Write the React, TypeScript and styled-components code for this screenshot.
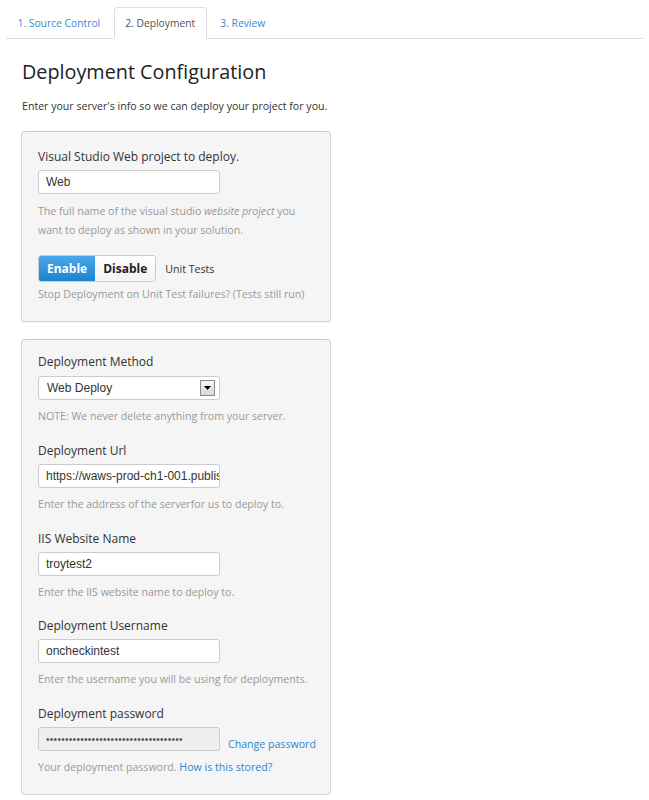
import styled, { createGlobalStyle } from 'styled-components';
import { Fragment } from 'react';

const GlobalStyle = createGlobalStyle`
  body {
    margin: 0;
    background: #fff;
    font-family: "Open Sans", "Liberation Sans", sans-serif;
    color: #333;
  }
`;

const Page = styled.div`
  padding: 7px 6px 0 6px;
`;

const Tabs = styled.div`
  display: flex;
  height: 31px;
  border-bottom: 1px solid #ddd;
`;

const Tab = styled.div<{ $active?: boolean }>`
  display: flex;
  align-items: center;
  padding: 0 10.5px;
  margin-right: 2px;
  margin-bottom: -1px;
  font-size: 10.3px;
  color: ${(p) => (p.$active ? '#555' : '#3a8ad2')};
  background: ${(p) => (p.$active ? '#fff' : 'transparent')};
  border: 1px solid ${(p) => (p.$active ? '#ddd' : 'transparent')};
  border-bottom-color: ${(p) => (p.$active ? '#fff' : 'transparent')};
  border-radius: 4px 4px 0 0;
`;

const Content = styled.div`
  padding-left: 15px;
`;

const Heading = styled.h1`
  margin: 19px 0 0 1px;
  font-size: 19.8px;
  line-height: 28px;
  font-weight: 400;
  color: #222;
`;

const Intro = styled.p`
  margin: 12px 0 0 1px;
  font-size: 10.6px;
  line-height: 16px;
  color: #333;
`;

const Panel = styled.div<{ $top: number; $padTop: number }>`
  width: 276px;
  margin-top: ${(p) => p.$top}px;
  padding: ${(p) => p.$padTop}px 16px 17px 16px;
  background: #f5f5f5;
  border: 1px solid #d6d6d6;
  border-top-color: #ccc;
  border-radius: 4px;
  box-shadow: 0 1px 1px rgba(0, 0, 0, 0.05);
`;

const Group = styled.div<{ $first?: boolean }>`
  margin-top: ${(p) => (p.$first ? 0 : 15.75)}px;
`;

const Label = styled.div`
  font-size: 12px;
  line-height: 18px;
  color: #333;
`;

const Row = styled.div`
  display: flex;
  align-items: flex-end;
  gap: 8px;
  margin-top: 4px;
`;

const TextBox = styled.div<{ $disabled?: boolean; $inRow?: boolean }>`
  box-sizing: border-box;
  flex-shrink: 0;
  width: 182px;
  height: 24px;
  margin-top: ${(p) => (p.$inRow ? 0 : 4)}px;
  padding: 0 7px;
  display: flex;
  align-items: center;
  overflow: hidden;
  white-space: nowrap;
  font-family: "Liberation Sans", Arial, sans-serif;
  font-size: 12px;
  color: #333;
  background: ${(p) => (p.$disabled ? '#eee' : '#fff')};
  border: 1px solid #ccc;
  border-radius: 3px;
`;

const Dots = styled.span`
  font-size: 10px;
  letter-spacing: 0.3px;
  color: #555;
`;

const Select = styled.div`
  box-sizing: border-box;
  width: 182px;
  height: 24px;
  margin-top: 5px;
  padding: 0 4px 0 8px;
  display: flex;
  align-items: center;
  justify-content: space-between;
  font-family: "Liberation Sans", Arial, sans-serif;
  font-size: 12px;
  color: #333;
  background: #fff;
  border: 1px solid #ccc;
  border-radius: 3px;
`;

const ArrowBox = styled.div`
  box-sizing: border-box;
  width: 15px;
  height: 16px;
  display: flex;
  align-items: center;
  justify-content: center;
  border: 1px solid #8a8a8a;
  background: linear-gradient(#f6f6f6, #d8d8d8);
`;

const Help = styled.div<{ $top?: number }>`
  margin-top: ${(p) => p.$top ?? 7}px;
  font-size: 10.6px;
  line-height: 19px;
  color: #999;
  white-space: nowrap;
`;

const Link = styled.a`
  color: #2a87d0;
  text-decoration: none;
  font-size: 10.6px;
  white-space: nowrap;
`;

const ButtonRow = styled.div`
  display: flex;
  align-items: center;
  margin-top: 15px;
`;

const ButtonGroup = styled.div`
  display: flex;
  height: 25px;
  border: 1px solid #ccc;
  border-radius: 3px;
  overflow: hidden;
`;

const ToggleButton = styled.div<{ $on?: boolean }>`
  display: flex;
  align-items: center;
  padding: 0 8px;
  font-size: 12px;
  font-weight: 700;
  color: ${(p) => (p.$on ? '#fff' : '#222')};
  background: ${(p) => (p.$on ? 'linear-gradient(#4aa8ec, #1d82d0)' : 'linear-gradient(#fff, #f3f3f3)')};
`;

const UnitTests = styled.span`
  margin-left: 9px;
  font-size: 10.6px;
  color: #333;
`;

interface FieldProps {
  label: string;
  value: string;
  help: string;
}

function Field({ label, value, help }: FieldProps): JSX.Element {
  return (
    <Group>
      <Label>{label}</Label>
      <TextBox>{value}</TextBox>
      <Help>{help}</Help>
    </Group>
  );
}

export default function App(): JSX.Element {
  return (
    <Fragment>
      <GlobalStyle />
      <Page>
        <Tabs>
          <Tab>1. Source Control</Tab>
          <Tab $active>2. Deployment</Tab>
          <Tab>3. Review</Tab>
        </Tabs>

        <Content>
          <Heading>Deployment Configuration</Heading>
          <Intro>Enter your server's info so we can deploy your project for you.</Intro>

          <Panel $top={17} $padTop={16}>
            <Label>Visual Studio Web project to deploy.</Label>
            <TextBox>Web</TextBox>
            <Help $top={8}>
              The full name of the visual studio <i>website project</i> you
              <br />
              want to deploy as shown in your solution.
            </Help>
            <ButtonRow>
              <ButtonGroup>
                <ToggleButton $on>Enable</ToggleButton>
                <ToggleButton>Disable</ToggleButton>
              </ButtonGroup>
              <UnitTests>Unit Tests</UnitTests>
            </ButtonRow>
            <Help $top={3}>Stop Deployment on Unit Test failures? (Tests still run)</Help>
          </Panel>

          <Panel $top={17} $padTop={13}>
            <Group $first>
              <Label>Deployment Method</Label>
              <Select>
                <span>Web Deploy</span>
                <ArrowBox>
                  <svg width="7" height="4" viewBox="0 0 7 4">
                    <path d="M0 0h7L3.5 4z" fill="#000" />
                  </svg>
                </ArrowBox>
              </Select>
              <Help>NOTE: We never delete anything from your server.</Help>
            </Group>
            <Field
              label="Deployment Url"
              value="https://waws-prod-ch1-001.publish.azurewebsites.windows.net"
              help="Enter the address of the serverfor us to deploy to."
            />
            <Field label="IIS Website Name" value="troytest2" help="Enter the IIS website name to deploy to." />
            <Field
              label="Deployment Username"
              value="oncheckintest"
              help="Enter the username you will be using for deployments."
            />
            <Group>
              <Label>Deployment password</Label>
              <Row>
                <TextBox $disabled $inRow>
                  <Dots>{'•'.repeat(36)}</Dots>
                </TextBox>
                <Link href="#">Change password</Link>
              </Row>
              <Help>
                Your deployment password. <Link href="#">How is this stored?</Link>
              </Help>
            </Group>
          </Panel>
        </Content>
      </Page>
    </Fragment>
  );
}
